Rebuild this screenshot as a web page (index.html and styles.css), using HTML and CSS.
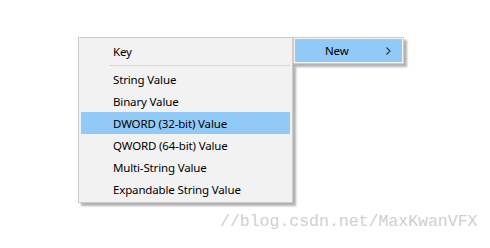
FILE: index.html
```html
<!DOCTYPE html>
<html>
<head>
    <title>New - Context Menu</title>
    <link rel="stylesheet" href="styles.css">
</head>
<body>
    <div class="scene">
        <div class="menu">
            <div class="item">Key</div>
            <div class="sep"></div>
            <div class="item">String Value</div>
            <div class="item">Binary Value</div>
            <div class="item active">DWORD (32-bit) Value</div>
            <div class="item">QWORD (64-bit) Value</div>
            <div class="item">Multi-String Value</div>
            <div class="item">Expandable String Value</div>
        </div>
        <div class="submenu">
            <div class="sub-item">
                <span>New</span>
                <svg class="chevron" width="5" height="8" viewBox="0 0 5 8">
                    <polyline points="0.5,0.5 4,4 0.5,7.5" fill="none" stroke="#333" stroke-width="1.1"/>
                </svg>
            </div>
        </div>
    </div>
    <div class="watermark">//blog.csdn.net/MaxKwanVFX</div>
</body>
</html>
```

FILE: styles.css
```css
body {
    margin: 0;
    background: #fff;
    font-family: "Noto Sans", "Liberation Sans", sans-serif;
    font-size: 11.5px;
    letter-spacing: -0.15px;
    color: #000;
}
.scene {
    display: flex;
    align-items: flex-start;
    padding: 37px 0 0 78px;
}
.menu {
    width: 215px;
    box-sizing: border-box;
    border: 1px solid #cccccc;
    background: #f2f2f2;
    padding: 2px;
    box-shadow: 3px 3px 2px rgba(0, 0, 0, 0.3);
}
.item {
    height: 22px;
    line-height: 24px;
    padding-left: 32px;
    white-space: nowrap;
    overflow: hidden;
}
.item.active {
    background: #91c9f7;
}
.sep {
    height: 6px;
    display: flex;
    align-items: center;
    padding-left: 28px;
}
.sep::after {
    content: "";
    flex: 1;
    height: 1px;
    background: #d7d7d7;
}
.submenu {
    width: 111px;
    box-sizing: border-box;
    border: 1px solid #cccccc;
    background: #f2f2f2;
    padding: 1px;
    box-shadow: 3px 3px 2px rgba(0, 0, 0, 0.3);
}
.sub-item {
    height: 23px;
    line-height: 25px;
    background: #91c9f7;
    display: flex;
    align-items: center;
    padding-left: 30px;
    padding-right: 11px;
}
.sub-item span {
    flex: 1;
}
.chevron {
    display: block;
}
.watermark {
    margin: 9px 0 0 220px;
    font-family: "Liberation Mono", monospace;
    font-size: 16.5px;
    letter-spacing: 0;
    line-height: 20px;
    color: #cfcfcf;
    white-space: nowrap;
}
```
